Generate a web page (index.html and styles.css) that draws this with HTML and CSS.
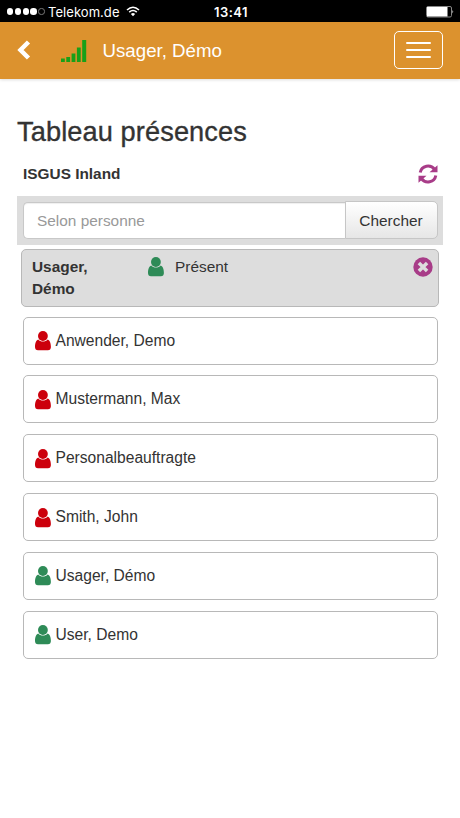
FILE: index.html
```html
<!DOCTYPE html>
<html lang="fr">
<head>
<meta charset="utf-8">
<title>Tableau présences</title>
<link rel="stylesheet" href="styles.css">
</head>
<body>
<svg class="defs" width="0" height="0">
  <symbol id="person" viewBox="0 0 16 20"><circle cx="7.9" cy="5" r="4.9"/><path d="M3.2 8.5C5.500 11.200 10.300 11.200 12.700 8.500C14.900 9.200 15.900 12.500 15.900 16C15.900 18 14.800 19.300 12.900 19.300H3C1.100 19.300 0 18 0 16C0 12.500 1 9.200 3.200 8.500Z"/></symbol>
</svg>
<div class="status">
  <div class="carrier"><span class="dots"><i></i><i></i><i></i><i></i><i class="empty"></i></span><span class="operator">Telekom.de</span>
    <svg class="wifi" viewBox="0 0 14 11" fill="none" stroke="#fff" stroke-width="1.600"><path d="M1 4Q7-1.500 13 4M3.200 6.200Q7 2.800 10.800 6.200"/><path d="M4.900 8Q7 6 9.100 8L7 10.300Z" fill="#fff" stroke="none"/></svg>
  </div>
  <time>13:41</time>
  <svg class="battery" viewBox="0 0 28 12"><rect x=".5" y=".5" width="25" height="10.500" rx="1.500" fill="none" stroke="#888"/><rect x="1" y="1" width="20.500" height="9.500" fill="#fff"/><path d="M26.500 4Q28 5.700 26.500 7.500Z" fill="#fff"/></svg>
</div>
<header class="navbar">
  <svg class="back" viewBox="0 0 14 20"><path d="M11.500 2L3.500 10L11.500 18" fill="none" stroke="#fff" stroke-width="4.500"/></svg>
  <svg class="signal" viewBox="0 0 26 22" fill="#18a018"><path d="M0 18.500h3.800V22H0zM5.300 17h3.800v5h-3.800zM10.600 13.500h3.800V22h-3.800zM15.900 7.500h3.800V22h-3.800zM21.200 0h4v22h-4z"/></svg>
  <span class="brand">Usager, Démo</span>
  <button class="menu"><i></i><i></i><i></i></button>
</header>
<main>
  <h1>Tableau présences</h1>
  <div class="group">
    <strong>ISGUS Inland</strong>
    <svg class="refresh" viewBox="0 0 20 20"><path d="M2.200 8.500C3.500 1.500 12.500-.2 16.700 5.500M17.800 11.500C16.500 18.500 7.500 20.200 3.300 14.500" fill="none" stroke="#a83c88" stroke-width="3"/><path d="M19.500 1.300V8.300H11.500ZM.5 18.700V11.700H8.500Z"/></svg>
  </div>
  <form class="search"><input type="text" placeholder="Selon personne"><button type="button">Chercher</button></form>
  <section class="selected">
    <strong>Usager, Démo</strong>
    <svg class="person in"><use href="#person"/></svg>
    <span class="state">Présent</span>
    <svg class="close" viewBox="0 0 20 20"><circle cx="10" cy="10" r="9.700"/><path d="M5.900 5.900L14.100 14.100M14.100 5.900L5.900 14.100" stroke="#ddd" stroke-width="3.500"/></svg>
  </section>
  <ul>
    <li><svg class="person out"><use href="#person"/></svg>Anwender, Demo</li>
    <li><svg class="person out"><use href="#person"/></svg>Mustermann, Max</li>
    <li><svg class="person out"><use href="#person"/></svg>Personalbeauftragte</li>
    <li><svg class="person out"><use href="#person"/></svg>Smith, John</li>
    <li><svg class="person in"><use href="#person"/></svg>Usager, Démo</li>
    <li><svg class="person in"><use href="#person"/></svg>User, Demo</li>
  </ul>
</main>
</body>
</html>
```
FILE: styles.css
```css
* { box-sizing: border-box; }
body { margin: 0; background: #fff; color: #333; font: 15.4px/22px "Liberation Sans", Arial, sans-serif; }
svg { display: block; flex: none; }
.defs { position: absolute; }
.status { height: 22px; padding: 0 6px 0 7px; background: #000; color: #fff; display: grid; grid-template-columns: 1fr auto 1fr; align-items: center; font: 13px/22px Inter, sans-serif; }
.carrier { display: flex; align-items: center; }
.dots { display: flex; gap: 1.400px; margin-right: 3.500px; }
.dots i { width: 6.400px; height: 6.400px; border-radius: 50%; background: #fff; }
.dots .empty { background: none; border: 1px solid #777; }
.operator { padding-top: 1px; letter-spacing: .05px; }
.wifi { width: 14px; height: 11px; margin-left: 6px; }
.status time { font-weight: 600; padding: 1px 0 0 1px; letter-spacing: .45px; }
.battery { width: 28px; height: 12px; justify-self: end; }
.navbar { height: 57px; padding: 0 17px; background: #dc922e; border-bottom: 1px solid #dc922e; display: flex; align-items: center; color: #fff; box-shadow: 0 1px 3px #0002; }
.back { width: 14px; height: 20px; }
.signal { width: 26px; height: 22px; margin: 2px 0 0 30px; }
.brand { margin: 2px 0 0 15.500px; font-size: 18.700px; }
.menu { width: 49px; height: 38px; margin: -1px 0 0 auto; padding: 0; border: 1px solid #fff; border-radius: 5px; background: none; display: flex; flex-direction: column; gap: 5px; align-items: center; justify-content: center; }
.menu i { width: 25px; height: 2px; background: #fff; border-radius: 1px; }
main { padding: 0 17px; }
h1 { margin: 36px 0 0; font-size: 27.200px; line-height: 34px; font-weight: 500; letter-spacing: .1px; -webkit-text-stroke: .35px #333; }
.group { height: 46px; margin-top: 1px; padding: 0 5px 0 6px; display: flex; justify-content: space-between; align-items: center; }
.group strong { margin-top: 2px; }
.refresh { width: 20px; height: 20px; margin-top: 1px; fill: #a83c88; }
.search { height: 49px; margin: 0; padding: 6px 5px 6px 6px; background: #ddd; display: flex; }
.search input { flex: 1; min-width: 0; height: 37px; padding: 0 13px; border: 1px solid #c8c8c8; border-right: 0; border-radius: 5px 0 0 5px; font: inherit; box-shadow: inset 0 1px 1px #0001; }
.search input::placeholder { color: #999; opacity: 1; }
.search button { width: 93px; height: 38px; margin-top: -1px; padding: 1px 1px 0 0; border: 1px solid #c6c6c6; border-radius: 0 5px 5px 0; background: linear-gradient(#fff, #e6e6e6); font: inherit; color: #333; }
.selected { margin: 4px 4px 0; height: 58px; padding: 6px 5px 0 10px; border: 1px solid #b8b8b8; border-radius: 5px; background: #ddd; display: flex; align-items: flex-start; }
.selected strong { width: 116px; padding-right: 40px; }
.person { width: 16px; height: 20px; margin-top: 1px; }
.in { fill: #2e8b57; }
.out { fill: #cc000c; }
.state { margin-left: 11px; }
.close { width: 20px; height: 20px; margin: 1px 0 0 auto; fill: #a83c88; }
ul { list-style: none; margin: 9.500px 5px 0 5.500px; padding: 0; display: grid; gap: 10.850px; }
li { height: 48px; padding: 0 11px; border: 1px solid #b8b8b8; border-radius: 5px; display: flex; align-items: center; gap: 5px; font-size: 15.600px; }
```
